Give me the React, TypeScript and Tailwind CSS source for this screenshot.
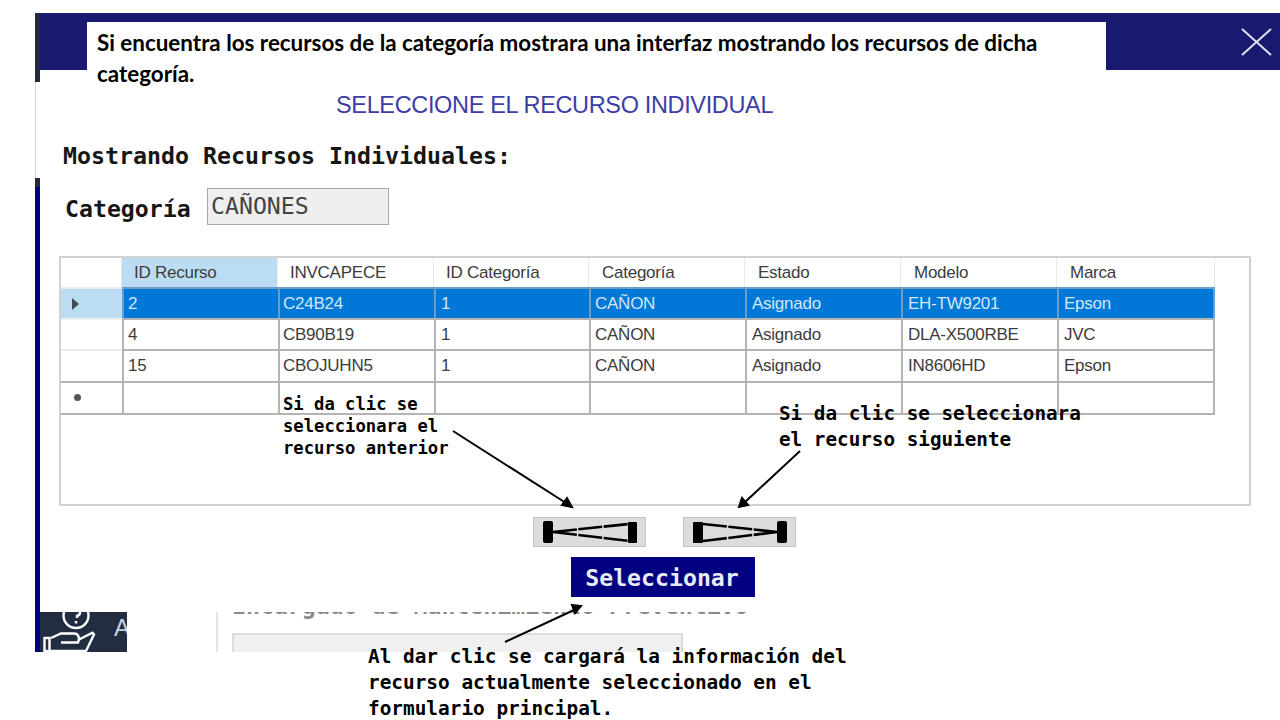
const mono = "font-['DejaVu_Sans_Mono',monospace]";

const columns = [
  { title: 'ID Recurso', headPad: 'pl-[12px]', cellPad: 'pl-[4px]' },
  { title: 'INVCAPECE', headPad: 'pl-[12px]', cellPad: 'pl-[3px]' },
  { title: 'ID Categoría', headPad: 'pl-[12px]', cellPad: 'pl-[5px]' },
  { title: 'Categoría', headPad: 'pl-[13px]', cellPad: 'pl-[4px]' },
  { title: 'Estado', headPad: 'pl-[13px]', cellPad: 'pl-[5px]' },
  { title: 'Modelo', headPad: 'pl-[13px]', cellPad: 'pl-[5px]' },
  { title: 'Marca', headPad: 'pl-[13px]', cellPad: 'pl-[5px]' },
];

const rows = [
  ['2', 'C24B24', '1', 'CAÑON', 'Asignado', 'EH-TW9201', 'Epson'],
  ['4', 'CB90B19', '1', 'CAÑON', 'Asignado', 'DLA-X500RBE', 'JVC'],
  ['15', 'CBOJUHN5', '1', 'CAÑON', 'Asignado', 'IN8606HD', 'Epson'],
  ['', '', '', '', '', '', ''],
];

const rowHeights = ['h-[31px]', 'h-[31px]', 'h-[32px]', 'h-[32px]'];
const gridCols = 'grid grid-cols-[61px_156px_156px_155px_156px_156px_156px_158px]';

const PrevIcon = () => (
  <svg width="113" height="30" viewBox="0 0 113 30" className="block">
    <rect x="10" y="4" width="10" height="22" rx="2" fill="#000" />
    <rect x="95" y="5" width="9" height="21" rx="1" fill="#000" />
    <path d="M20 15 L96 7 M20 15 L96 24" stroke="#000" strokeWidth="2.6" strokeDasharray="24 1.5" fill="none" />
  </svg>
);

const NextIcon = () => (
  <svg width="113" height="30" viewBox="0 0 113 30" className="block">
    <rect x="10" y="5" width="10" height="21" rx="1" fill="#000" />
    <rect x="94" y="4" width="10" height="22" rx="2" fill="#000" />
    <path d="M20 7 L94 15 M20 24 L94 15" stroke="#000" strokeWidth="2.6" strokeDasharray="24 1.5" fill="none" />
  </svg>
);

const SupportIcon = () => (
  <svg width="74" height="40" viewBox="0 0 74 40" fill="none" stroke="#fff" strokeWidth="2.4" className="shrink-0">
    <circle cx="36" cy="3.5" r="12.5" />
    <path d="M32 0 a4 4 0 1 1 5 4 v2 M36 9 v2.4" />
    <rect x="4.5" y="26" width="5" height="13" />
    <path d="M11 26 L21 21.5 H34 C39 21.5 40 27 38 30.5 H21" />
    <path d="M39 27.5 L52.5 20.8 L54 22.5 L46 39 H9" />
  </svg>
);

export default function App() {
  return (
    <div className="relative w-[1280px] h-[720px] overflow-hidden bg-white font-['Liberation_Sans',sans-serif]">
      <div className="flex ml-[35px] mt-[13px] w-[1245px] h-[639px]">
        {/* borde izquierdo de la ventana */}
        <div className="flex flex-col w-[5px] shrink-0">
          <div className="h-[69px] bg-[#23293f]" />
          <div className="h-[96px] border-l border-[#d8d8d8]" />
          <div className="h-[9px] bg-[#23293f]" />
          <div className="flex-1 bg-[#000080]" />
        </div>

        <div className="flex flex-col flex-1 min-w-0">
          <div className="flex items-start justify-end h-[57px] bg-[#191970] pt-[15px] pr-[8px]">
            <svg width="32" height="28" viewBox="0 0 32 28" stroke="#dfe0ee" strokeWidth="2" fill="none">
              <path d="M2 1 L31 27 M31 1 L2 27" />
            </svg>
          </div>

          <h1 className="mt-[20px] h-[30px] pl-[296px] text-[23.5px] leading-[30px] tracking-[-0.35px] text-[#3d3da6] font-normal whitespace-nowrap">
            SELECCIONE EL RECURSO INDIVIDUAL
          </h1>

          <p className={`${mono} mt-[21px] h-[30px] pl-[23px] text-[23.25px] leading-[30px] font-bold text-[#161616] whitespace-nowrap`}>
            Mostrando Recursos Individuales:
          </p>

          <div className="flex items-center mt-[17px] h-[37px] pl-[25px]">
            <span className={`${mono} w-[142px] pt-[5px] text-[23.2px] font-bold text-[#161616]`}>Categoría</span>
            <div className={`${mono} w-[182px] h-[37px] pl-[3px] bg-[#efefef] border border-[#a9a9a9] text-[23.2px] leading-[34px] text-[#444]`}>
              CAÑONES
            </div>
          </div>

          {/* grilla de recursos */}
          <div className="mt-[31px] ml-[19px] w-[1192px] h-[250px] border-2 border-[#d2d2d2]">
            <div className={`${gridCols} w-[1154px] h-[29px] text-[17px] leading-[30px] tracking-[-0.25px] text-[#3c3c3c]`}>
              <div className="border-r border-[#e8e8e8]" />
              {columns.map((col, i) => (
                <div
                  key={col.title}
                  className={`${col.headPad} border-r border-[#e8e8e8] ${i === 0 ? 'bg-[#bcdcf4]' : 'bg-white'}`}
                >
                  {col.title}
                </div>
              ))}
            </div>
            {rows.map((row, r) => (
              <div
                key={r}
                className={`${gridCols} w-[1154px] ${rowHeights[r]} text-[17px] leading-[30px] tracking-[-0.25px] ${r === 0 ? 'text-[#d3e6f6]' : 'text-[#3c3c3c]'}`}
              >
                <div className={`flex items-center pl-[10px] border-t-2 ${r === 3 ? 'border-[#b4b4b4]' : 'border-[#ececec]'} ${r === 0 ? 'bg-[#bcdcf4]' : ''}`}>
                  {r === 0 && (
                    <svg width="10" height="12" viewBox="0 0 10 12">
                      <path d="M1 0 L8 6 L1 12 Z" fill="#3f4a54" />
                    </svg>
                  )}
                  {r === 3 && <span className="w-[7px] h-[7px] ml-[3px] mb-[2px] rounded-full bg-[#555]" />}
                </div>
                {row.map((value, c) => (
                  <div
                    key={c}
                    className={`${columns[c].cellPad} border-t-2 border-l-2 ${r === 0 ? 'bg-[#0078d7] border-[#6d9cc4]' : 'border-[#b4b4b4]'} ${c === 6 ? 'border-r-2' : ''}`}
                  >
                    {value}
                  </div>
                ))}
              </div>
            ))}
            <div className="w-[1154px] h-[2px] bg-[#b4b4b4]" />
          </div>

          <div className="flex mt-[11px] h-[30px] pl-[493px] gap-[37px]">
            <button className="w-[113px] h-[30px] bg-[#dcdcdc] border border-[#c4c4c4]">
              <span className="block -m-px"><PrevIcon /></span>
            </button>
            <button className="w-[113px] h-[30px] bg-[#dcdcdc] border border-[#c4c4c4]">
              <span className="block -m-px"><NextIcon /></span>
            </button>
          </div>

          <button className={`${mono} mt-[10px] ml-[531px] w-[184px] h-[40px] pt-[2px] pr-[2px] bg-[#000080] text-[23.2px] font-bold text-[#e8ecf8]`}>
            Seleccionar
          </button>

          {/* restos del formulario principal, recortados */}
          <div className="flex mt-[15px] h-[40px] overflow-hidden">
            <div className="flex w-[87px] h-[40px] bg-[#222d42] overflow-hidden">
              <SupportIcon />
              <span className="text-[24px] leading-[32px] text-[#c9d3e6]">A</span>
            </div>
            <div className="ml-[89px] w-[2px] h-[40px] bg-[#e4e4e4]" />
            <div className="ml-[14px] flex flex-col">
              <div className="w-[530px] h-[8px] overflow-hidden">
                <p className={`${mono} -mt-[18px] text-[23.2px] leading-[23px] font-bold text-[#8a8a8a] whitespace-nowrap`}>
                  Encargado de Mantenimiento Preventivo
                </p>
              </div>
              <div className="mt-[14px] w-[451px] h-[20px] bg-[#f0f0f0] border-t-2 border-x-2 border-[#dcdcdc]" />
            </div>
          </div>
        </div>
      </div>

      {/* notas sobre la captura */}
      <div className="absolute left-[87px] top-[22px] w-[1019px] h-[62px] bg-white pl-[10px] pr-[60px] pt-[5px] font-['Lato',sans-serif] text-[22.4px] leading-[31px] font-bold text-black">
        Si encuentra los recursos de la categoría mostrara una interfaz mostrando los recursos de dicha categoría.
      </div>

      <p className={`${mono} absolute left-[283px] top-[393px] text-[17.2px] leading-[22px] font-bold text-black whitespace-pre`}>
        {'Si da clic se\nseleccionara el\nrecurso anterior'}
      </p>
      <p className={`${mono} absolute left-[779px] top-[401px] text-[19.3px] leading-[26px] font-bold text-black whitespace-pre`}>
        {'Si da clic se seleccionara\nel recurso siguiente'}
      </p>
      <p className={`${mono} absolute left-[368px] top-[644px] text-[19.4px] leading-[26px] font-bold text-black whitespace-pre`}>
        {'Al dar clic se cargará la información del\nrecurso actualmente seleccionado en el\nformulario principal.'}
      </p>

      <svg className="absolute left-0 top-0 pointer-events-none" width="1280" height="720" fill="none" stroke="#000" strokeWidth="2">
        <path d="M453 431 L566 503" />
        <path d="M562 505 L572 507 L567 498 Z" fill="#000" />
        <path d="M800 451 L744 503" />
        <path d="M748 505 L739 507 L742 498 Z" fill="#000" />
        <path d="M505 642 L574 610" />
        <path d="M572 605 L581 606 L575 613 Z" fill="#000" />
      </svg>
    </div>
  );
}
